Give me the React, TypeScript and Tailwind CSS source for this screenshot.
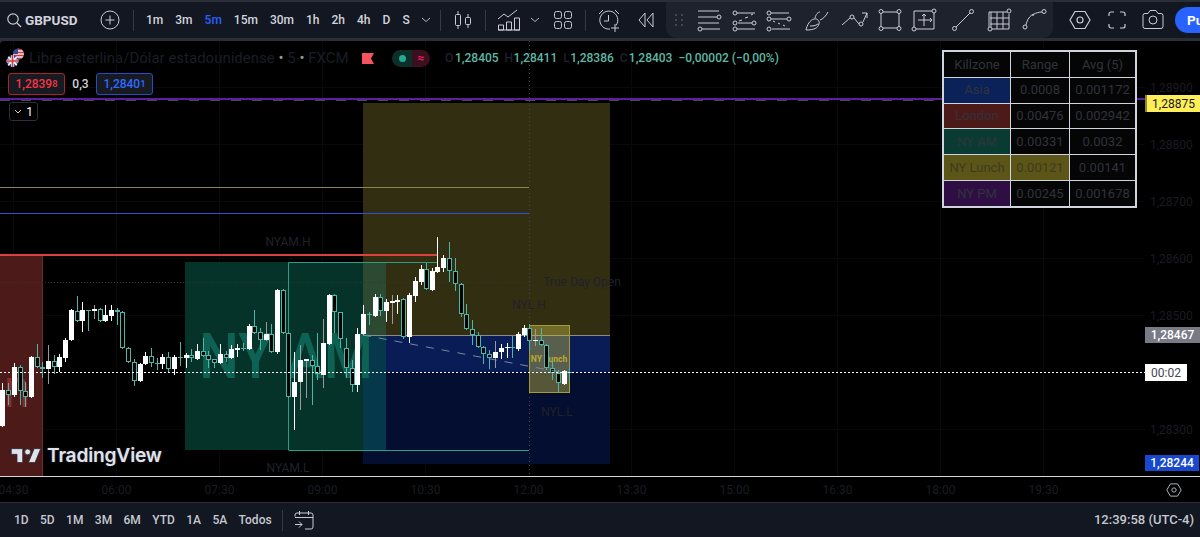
import type { ReactNode } from 'react'

type Kind = 'w' | 'g' | 't'
// x, wick top, body top, body bottom, wick bottom, kind
const CANDLES: [number, number, number, number, number, Kind][] = [
  [2, 383, 390, 426, 427, 'w'], [8, 383, 390, 395, 405, 't'], [14, 363, 367, 395, 397, 'w'], [20, 365, 367, 391, 405, 't'],
  [25, 382, 391, 397, 407, 't'], [31, 356, 357, 397, 398, 'w'], [37, 344, 357, 367, 368, 't'], [42, 362, 367, 369, 378, 't'],
  [48, 345, 361, 369, 384, 'g'], [54, 355, 361, 367, 374, 't'], [59, 354, 357, 367, 372, 'w'], [65, 338, 340, 358, 362, 'w'],
  [71, 309, 310, 340, 341, 'w'], [77, 296, 311, 321, 322, 't'], [82, 302, 310, 321, 332, 'w'], [88, 310, 310, 311, 331, 't'],
  [94, 305, 309, 311, 319, 'g'], [100, 308, 309, 321, 322, 't'], [105, 305, 315, 321, 322, 'w'], [111, 305, 310, 316, 321, 'w'],
  [117, 308, 310, 312, 325, 't'], [122, 311, 312, 348, 349, 't'], [128, 347, 348, 362, 363, 't'], [134, 359, 362, 381, 386, 't'],
  [140, 363, 364, 381, 382, 'w'], [145, 352, 356, 364, 365, 'w'], [151, 348, 356, 363, 367, 't'], [157, 358, 363, 364, 370, 't'],
  [162, 354, 357, 364, 369, 'w'], [168, 352, 357, 369, 372, 't'], [174, 355, 357, 369, 375, 'w'], [180, 342, 357, 358, 366, 't'],
  [186, 353, 355, 358, 368, 'w'], [191, 349, 355, 358, 362, 't'], [197, 344, 351, 359, 360, 'w'], [203, 338, 351, 356, 357, 't'],
  [208, 351, 355, 360, 368, 't'], [214, 359, 359, 363, 368, 't'], [220, 344, 354, 363, 364, 'w'], [226, 351, 354, 358, 362, 't'],
  [231, 345, 349, 358, 359, 'w'], [237, 344, 348, 350, 357, 'w'], [243, 343, 348, 349, 351, 't'], [249, 324, 326, 349, 350, 'w'],
  [254, 310, 326, 333, 334, 't'], [260, 328, 332, 340, 350, 't'], [266, 322, 334, 340, 341, 'g'], [271, 324, 334, 352, 353, 't'],
  [277, 289, 290, 352, 354, 'w'], [283, 289, 290, 333, 334, 't'], [288, 332, 333, 397, 398, 't'], [294, 352, 382, 397, 430, 'w'],
  [300, 345, 360, 382, 410, 'g'], [306, 359, 359, 361, 398, 'g'], [312, 355, 360, 366, 405, 't'], [317, 333, 366, 374, 380, 't'],
  [323, 319, 343, 375, 388, 'g'], [329, 294, 295, 344, 345, 'w'], [334, 294, 295, 312, 333, 't'], [340, 312, 312, 339, 348, 't'],
  [346, 338, 348, 368, 378, 't'], [352, 360, 368, 385, 392, 't'], [357, 328, 334, 385, 392, 'w'], [363, 305, 314, 334, 335, 'w'],
  [369, 312, 314, 315, 325, 't'], [375, 294, 297, 316, 317, 'w'], [380, 294, 297, 311, 316, 't'], [386, 299, 302, 311, 322, 'w'],
  [392, 295, 301, 303, 324, 'g'], [397, 295, 300, 302, 314, 'w'], [403, 298, 299, 337, 339, 't'], [409, 293, 295, 337, 343, 'w'],
  [415, 277, 281, 296, 302, 'w'], [421, 265, 269, 282, 285, 'w'], [426, 263, 269, 289, 290, 't'], [432, 268, 271, 290, 291, 'w'],
  [437, 237, 267, 272, 273, 'w'], [443, 255, 258, 268, 272, 'w'], [449, 242, 258, 271, 282, 't'], [455, 258, 271, 284, 291, 't'],
  [461, 283, 284, 314, 317, 't'], [466, 304, 314, 329, 330, 't'], [472, 320, 329, 335, 345, 't'], [478, 332, 335, 347, 348, 't'],
  [483, 346, 347, 354, 364, 't'], [489, 350, 354, 358, 369, 't'], [495, 341, 352, 358, 368, 'g'], [501, 344, 348, 352, 359, 'w'],
  [507, 343, 347, 348, 358, 'w'], [512, 336, 347, 348, 358, 't'], [518, 332, 334, 349, 351, 'w'], [524, 325, 328, 335, 337, 'w'],
  [529, 324, 328, 341, 350, 't'], [535, 329, 340, 341, 346, 'g'], [541, 328, 340, 345, 346, 't'], [546, 344, 345, 368, 370, 't'],
  [552, 360, 368, 373, 380, 't'], [558, 370, 373, 383, 392, 't'], [564, 370, 371, 384, 385, 'w'], [569, 367, 372, 373, 381, 't'],
]

const INTERVALS = ['1m', '3m', '5m', '15m', '30m', '1h', '2h', '4h', 'D', 'S']
const RANGES = ['1D', '5D', '1M', '3M', '6M', 'YTD', '1A', '5A', 'Todos']
const TIMES = ['04:30', '06:00', '07:30', '09:00', '10:30', '12:00', '13:30', '15:00', '16:30', '18:00', '19:30']
const PRICES: [string, string][] = [
  ['1,28900', 'top-[38px]'], ['1,28800', 'top-[95px]'], ['1,28700', 'top-[152px]'], ['1,28600', 'top-[209px]'],
  ['1,28500', 'top-[266px]'], ['1,28300', 'top-[380px]'],
]
const TABLE = [
  { name: 'Asia', bg: 'bg-[#0b2258]', range: '0.0008', avg: '0.001172' },
  { name: 'London', bg: 'bg-[#4d1a1a]', range: '0.00476', avg: '0.002942' },
  { name: 'NY AM', bg: 'bg-[#0a3b33]', range: '0.00331', avg: '0.0032' },
  { name: 'NY Lunch', bg: 'bg-[#5c5518]', range: '0.00121', avg: '0.00141', hot: true },
  { name: 'NY PM', bg: 'bg-[#2f0f43]', range: '0.00245', avg: '0.001678' },
]

function Ic({ children, className = '' }: { children: ReactNode; className?: string }) {
  return (
    <svg viewBox="0 0 28 28" fill="none" stroke="#c9ccd4" strokeWidth="1" className={`w-7 h-7 shrink-0 ${className}`}>
      {children}
    </svg>
  )
}

function Chevron({ className = '' }: { className?: string }) {
  return (
    <svg viewBox="0 0 10 6" fill="none" stroke="#b2b5be" strokeWidth="1" className={`w-2.5 h-1.5 shrink-0 ${className}`}>
      <path d="M1 1l4 3.5L9 1" />
    </svg>
  )
}

function Sep({ className = '' }: { className?: string }) {
  return <div className={`w-px h-[21px] bg-[#363a45] shrink-0 ${className}`} />
}

function Hex({ className = '' }: { className?: string }) {
  return (
    <Ic className={className}>
      <path d="M9 5.5h10l5 8.5-5 8.5H9L4 14z" strokeWidth="1.2" />
      <circle cx="14" cy="14" r="3" strokeWidth="1.2" />
    </Ic>
  )
}

function TopBar() {
  return (
    <div className="h-[36px] mt-[2px] flex items-center bg-[#131722] shrink-0 text-[#d1d4dc] text-[12px] font-medium">
      <svg viewBox="0 0 16 16" fill="none" stroke="#c9ccd4" strokeWidth="1.2" className="w-4 h-4 ml-[6px] shrink-0">
        <circle cx="7" cy="7" r="5.2" />
        <path d="M11 11l4 4" />
      </svg>
      <span className="ml-[3px] font-bold text-[13.5px] w-[50px]">GBPUSD</span>
      <svg viewBox="0 0 20 20" fill="none" stroke="#c9ccd4" strokeWidth="1" className="w-5 h-5 ml-[25px] shrink-0">
        <circle cx="10" cy="10" r="9" />
        <path d="M10 5.5v9M5.5 10h9" />
      </svg>
      <Sep className="ml-[13px]" />
      <div className="flex items-center gap-3 ml-3 w-[264px] shrink-0">
        {INTERVALS.map((t) => (
          <span key={t} className={t === '5m' ? 'text-[#2962ff]' : ''}>{t}</span>
        ))}
      </div>
      <Chevron className="ml-[11px]" />
      <Sep className="ml-[9px]" />
      <Ic className="ml-2">
        <path d="M9 5v18M19 8v14" />
        <rect x="6.5" y="8.5" width="5" height="11" rx="1" fill="#131722" />
        <rect x="16.5" y="11.5" width="5" height="7" rx="1" fill="#131722" />
      </Ic>
      <Sep className="ml-2" />
      <Ic className="ml-[9px]">
        <path d="M3 13l6-5 4 3 9-7" />
        <path d="M3.5 24v-5h5v5zM11.5 24v-8h5v8zM19.5 24V12h5v12zM3 24h22" />
      </Ic>
      <Chevron className="ml-[7px]" />
      <Ic className="ml-[9px]">
        <rect x="5.5" y="5.5" width="7" height="7" rx="2" />
        <rect x="15.5" y="5.5" width="7" height="7" rx="2" />
        <rect x="5.5" y="15.5" width="7" height="7" rx="2" />
        <rect x="15.5" y="15.5" width="7" height="7" rx="2" />
      </Ic>
      <Sep className="ml-2" />
      <Ic className="ml-[9px]">
        <path d="M21 19.5A9 9 0 1 0 15 23" />
        <path d="M13.5 9v6H9M4 8l4-4M20 4l4 4M20 18v8M16 22h8" />
      </Ic>
      <Ic className="ml-[9px]">
        <path d="M13 7l-6 7 6 7zM21 7l-6 7 6 7z" />
      </Ic>
      <div className="ml-[6px] w-[387px] h-[36px] flex items-center bg-[#1e222d] rounded-b-[10px] shrink-0">
        <div className="ml-[9px] grid grid-cols-2 gap-x-[4px] gap-y-[3px] w-[7px] shrink-0">
          {[0, 1, 2, 3, 4, 5].map((i) => <span key={i} className="w-[2px] h-[2px] bg-[#434651]" />)}
        </div>
        <Ic className="ml-[13px]">
          <path d="M3 5h21M3 11h19M3 17h21M7 23h18" />
          <circle cx="24" cy="11" r="2" /><circle cx="5" cy="23" r="2" />
        </Ic>
        <Ic className="ml-[7px]">
          <path d="M7 7h18M8 17h14M7 23h18M9 15l3-1m3-2l3-1m3-2l2-1" />
          <circle cx="5" cy="7" r="2" /><circle cx="5" cy="17" r="2" /><circle cx="24" cy="17" r="2" /><circle cx="5" cy="23" r="2" />
        </Ic>
        <Ic className="ml-[7px]">
          <path d="M6 7h18M6 13h16M7 23h18M8 15l2 1m3 1l2 1m3 1l2 1" />
          <circle cx="4" cy="7" r="2" /><circle cx="4" cy="13" r="2" /><circle cx="24" cy="13" r="2" /><circle cx="4" cy="23" r="2" />
        </Ic>
        <Ic className="ml-[11px]">
          <path d="M2 24c1-5 4-10 8-11 3-1 6 2 5 5-1 4-5 6-13 6zM11 12c1-4 3-6 5-6M16 14c3-1 6-4 8-8M6 20c3 0 5 0 8-2" />
        </Ic>
        <Ic className="ml-2">
          <path d="M2 19l8-7M14 12l5 6M23 16l4-9M27 7h-5M27 7v5" />
          <circle cx="12" cy="11" r="2" /><circle cx="21" cy="18" r="2" />
        </Ic>
        <Ic className="ml-2">
          <path d="M5 6h18M5 22h18M5 6v16M23 6v16" />
          <circle cx="5" cy="5.5" r="2" fill="#1e222d" /><circle cx="23" cy="5.5" r="2" fill="#1e222d" />
          <circle cx="5" cy="22.5" r="2" fill="#1e222d" /><circle cx="23" cy="22.5" r="2" fill="#1e222d" />
        </Ic>
        <Ic className="ml-[6px]">
          <path d="M4 5h18M24 7v16H6M4 5v16M14 9v11M8 14h14M12 10l2-2 2 2M20 12l2 2-2 2" />
          <circle cx="24" cy="5" r="2" fill="#1e222d" /><circle cx="4" cy="23" r="2" fill="#1e222d" />
        </Ic>
        <Ic className="ml-[11px]">
          <path d="M7 21L21 7" />
          <circle cx="5.5" cy="22.5" r="2" /><circle cx="22.5" cy="5.5" r="2" />
        </Ic>
        <Ic className="ml-2">
          <path d="M4 6h18M5 12h19M5 18h19M6 23h18M6 6v15M12 6v17M18 6v17M24 8v15M4 6v15" />
          <circle cx="24" cy="5" r="2" fill="#1e222d" /><circle cx="5" cy="23" r="2" fill="#1e222d" />
        </Ic>
        <Ic className="ml-[7px]">
          <path d="M6 19c1-5 4-10 8-11 2-1 5-2 8-2" />
          <circle cx="5" cy="21" r="2" /><circle cx="24" cy="5.5" r="2" />
          <circle cx="13" cy="9" r="0.6" />
        </Ic>
      </div>
      <Hex className="ml-[13px]" />
      <Ic className="ml-[9px]">
        <path d="M6 10V8a2 2 0 0 1 2-2h3M17 6h3a2 2 0 0 1 2 2v2M22 18v2a2 2 0 0 1-2 2h-3M11 22H8a2 2 0 0 1-2-2v-2" strokeWidth="1.2" />
      </Ic>
      <Ic className="ml-2">
        <path d="M4 9.5a2 2 0 0 1 2-2h3l2-3h6l2 3h3a2 2 0 0 1 2 2v11a2 2 0 0 1-2 2H6a2 2 0 0 1-2-2z" />
        <circle cx="14" cy="14" r="4" />
      </Ic>
      <div className="ml-2 flex-1 h-[26px] rounded-l-full bg-[#2962ff] text-white font-bold text-[13.5px] pl-3 flex items-center">
        Pu
      </div>
    </div>
  )
}

function Flags() {
  return (
    <svg viewBox="0 0 20 20" className="w-5 h-5 shrink-0 -ml-px">
      <defs>
        <clipPath id="us"><circle cx="12.5" cy="6" r="5.5" /></clipPath>
        <clipPath id="uk"><circle cx="6.5" cy="13" r="6" /></clipPath>
      </defs>
      <g clipPath="url(#us)">
        <rect x="6" width="14" height="12" fill="#eee" />
        <path d="M6 1.5h14M6 4.5h14M6 7.5h14M6 10.5h14" stroke="#d8343f" strokeWidth="1.4" />
        <rect x="6" width="6" height="6" fill="#2b4a9b" />
      </g>
      <circle cx="12.5" cy="6" r="6" fill="none" stroke="#000" strokeWidth="0.6" />
      <g clipPath="url(#uk)">
        <rect y="6" width="14" height="14" fill="#2b4a9b" />
        <path d="M0 7l13 12M13 7L0 19" stroke="#eee" strokeWidth="2" />
        <path d="M6.5 6v14M0 13h14" stroke="#eee" strokeWidth="3" />
        <path d="M6.5 6v14M0 13h14" stroke="#d8343f" strokeWidth="1.6" />
      </g>
    </svg>
  )
}

function Legend() {
  return (
    <div className="absolute left-[7px] top-[7px] flex flex-col items-start">
      <div className="flex items-center h-5">
        <Flags />
        <span className="ml-[3px] text-[15px] w-[322px] whitespace-nowrap text-[#1a1d26]">
          Libra esterlina/Dólar estadounidense <span className="text-[#9598a1]">•</span> 5 <span className="text-[#9598a1]">•</span> FXCM
        </span>
        <svg viewBox="0 0 12 11" className="ml-[11px] w-3 h-[11px] shrink-0">
          <path d="M0 0h12L9 5.5l3 5.5H0z" fill="#f7525f" />
        </svg>
        <div className="ml-[18px] flex h-[17px] w-[38px] rounded-full overflow-hidden shrink-0">
          <div className="w-[20px] bg-[#0d2f2a] flex items-center justify-center">
            <span className="w-[7px] h-[7px] rounded-full bg-[#22ab94]" />
          </div>
          <div className="w-[18px] bg-[#3a0f1e] text-[#e91e63] text-[12px] font-bold leading-[16px] text-center">≈</div>
        </div>
        <div className="ml-[15px] flex items-center text-[12px] font-medium text-[#5fb8a6] whitespace-nowrap">
          <span className="text-[#1e222d] w-[10px]">O</span><span>1,28405</span>
          <span className="text-[#1e222d] ml-[6px] w-[9px]">H</span><span>1,28411</span>
          <span className="text-[#1e222d] ml-[6px] w-[7px]">L</span><span>1,28386</span>
          <span className="text-[#1e222d] ml-[6px] w-[9px]">C</span><span>1,28403</span>
          <span className="ml-[6px]">−0,00002 (−0,00%)</span>
        </div>
      </div>
      <div className="flex items-center mt-[5px] ml-px text-[12px] font-medium">
        <div className="w-[57px] h-[22px] border border-[#a9232f] rounded-[3px] bg-[#181a22] text-[#f23645] flex items-center justify-center">
          1,2839<sup className="text-[9.5px] top-0">8</sup>
        </div>
        <span className="w-[31px] text-center text-[#d1d4dc]">0,3</span>
        <div className="w-[57px] h-[22px] border border-[#1f4fc4] rounded-[3px] bg-[#181a22] text-[#2f6bff] flex items-center justify-center">
          1,2840<sup className="text-[9.5px] top-0">1</sup>
        </div>
      </div>
      <div className="mt-[7px] ml-[2px] w-[29px] h-[19px] border border-[#2a2e39] rounded-[3px] flex items-center justify-center gap-[4px] text-white text-[12px]">
        <svg viewBox="0 0 8 5" fill="none" stroke="#d1d4dc" className="w-2 h-[5px]"><path d="M1 1l3 3 3-3" /></svg>
        1
      </div>
    </div>
  )
}

function KillzoneTable() {
  const cell = 'flex items-center justify-center bg-[#050505]'
  return (
    <div className="absolute left-[942px] top-[9px] w-[195px] grid grid-cols-[66px_58px_65px] auto-rows-[24.8px] gap-px border-2 border-[#d1d4dc] bg-[#d1d4dc] text-[13px] text-[#30333b]">
      <div className={cell}>Killzone</div>
      <div className={cell}>Range</div>
      <div className={cell}>Avg (5)</div>
      {TABLE.map((r) => (
        <div key={r.name} className="contents">
          <div className={`flex items-center justify-center ${r.bg} ${r.hot ? 'text-[#3d3b1c]' : ''}`}>{r.name}</div>
          <div className={r.hot ? 'flex items-center justify-center bg-[#5c5518] text-[#3d3b1c]' : cell}>{r.range}</div>
          <div className={cell}>{r.avg}</div>
        </div>
      ))}
    </div>
  )
}

function ChartSvg() {
  return (
    <svg viewBox="0 41 1145 435" className="absolute inset-0 w-[1145px] h-[435px]">
      {/* grid */}
      {TIMES.map((_, i) => <rect key={i} x={13 + i * 103} y="41" width="1" height="435" fill="#08090b" />)}
      {[87, 144, 201, 258, 315, 429].map((y) => <rect key={y} x="0" y={y} width="1145" height="1" fill="#08090b" />)}

      {/* killzone boxes */}
      <rect x="0" y="254" width="43" height="222" fill="#4d1a1a" />
      <rect x="42" y="254" width="1" height="222" fill="#6b2a2a" />
      <text x="4" y="407" fontSize="55" fill="#8a2a2c" textLength="26" lengthAdjust="spacingAndGlyphs">n</text>
      <rect x="185" y="262" width="201" height="188" fill="#053229" />
      <rect x="363" y="103" width="247" height="232" fill="#322e12" />
      <rect x="363" y="335" width="247" height="37" fill="#0a1c55" />
      <rect x="363" y="372" width="247" height="92" fill="#040e30" />
      <rect x="363" y="262" width="23" height="73" fill="#2c4a32" />
      <rect x="363" y="335" width="23" height="115" fill="#04384a" />
      <text x="199" y="378" fontSize="63" fontWeight="500" fill="#0d6254" textLength="174" lengthAdjust="spacingAndGlyphs">NY AM</text>

      {/* levels */}
      <rect x="0" y="98" width="1145" height="2" fill="#5b1fa0" />
      <path d="M0 100.5H942" stroke="#4a4a55" strokeDasharray="10 11" />
      <rect x="0" y="187" width="529" height="1" fill="#8a8350" />
      <rect x="0" y="213" width="529" height="1" fill="#2f50d8" />
      <rect x="0" y="254" width="437" height="2" fill="#d9423f" />
      <path d="M0 282.5H530" stroke="#333" strokeDasharray="1 2" />
      <rect x="363" y="335" width="247" height="1" fill="#8a8a8a" />
      <path d="M288.5 450V262.5H437M288.5 450.5H529" stroke="#2a9d86" fill="none" />
      <path d="M529.5 41V476" stroke="#444" strokeDasharray="1 3" />

      {/* NY Lunch */}
      <rect x="529.5" y="325.5" width="40" height="67" fill="#c9bd46" fillOpacity="0.42" stroke="#a89a2e" />
      <text x="549" y="362" fontSize="8.5" fontWeight="700" textAnchor="middle" fill="#b8aa2e">NY Lunch</text>

      {/* labels */}
      <g fontSize="12" fill="#1f2229" textAnchor="middle">
        <text x="288" y="246">NYAM.H</text>
        <text x="288" y="472">NYAM.L</text>
        <text x="529" y="309">NYL.H</text>
        <text x="557" y="416">NYL.L</text>
        <text x="582" y="286">True Day Open</text>
      </g>

      {/* candles */}
      {CANDLES.map(([x, wt, bt, bb, wb, k]) => {
        const wick = k === 't' ? '#4db6a6' : k === 'g' ? '#9a9a9a' : '#ffffff'
        return (
          <g key={x}>
            <rect x={x} y={wt} width="1" height={wb - wt} fill={wick} />
            {k === 't' ? (
              bb - bt < 2
                ? <rect x={x - 2} y={bt} width="5" height="1" fill="#4db6a6" />
                : <rect x={x - 1.5} y={bt + 0.5} width="4" height={bb - bt - 1} fill="#000" stroke="#4db6a6" />
            ) : (
              <rect x={x - 2} y={bt} width="5" height={bb - bt} fill="#fff" />
            )}
          </g>
        )
      })}

      {/* trend and last price */}
      <path d="M363 335L565 373" stroke="#7d8598" strokeWidth="1" strokeDasharray="8 8" />
      <path d="M0 372.5H1145" stroke="#fff" strokeDasharray="2 2" />
    </svg>
  )
}

function Watermark() {
  return (
    <div className="absolute left-[10px] top-[405px] flex items-center">
      <svg viewBox="0 0 36 22" className="w-[32px] h-[18px] shrink-0">
        <path d="M14 19H7V9H0V2h14zM29 19h-8l7-17h8z" fill="#e0e3eb" stroke="#2a2e39" strokeWidth="1" />
        <circle cx="20" cy="6" r="3.6" fill="#e0e3eb" stroke="#2a2e39" strokeWidth="1" />
      </svg>
      <span className="ml-[5px] font-[Inter,sans-serif] font-semibold text-[19.2px] leading-none text-[#e0e3eb] tracking-[-0.2px] [text-shadow:0_0_2px_#3a3e4a]">
        TradingView
      </span>
    </div>
  )
}

function PriceAxis() {
  const badge = 'absolute left-0 flex items-center justify-center h-[16px] text-[12px]'
  return (
    <div className="relative w-[55px] shrink-0 text-[12px] text-[#1a1c22]">
      {PRICES.map(([p, top]) => (
        <span key={p} className={`absolute left-[5px] ${top}`}>{p}</span>
      ))}
      <div className={`${badge} top-[54px] w-[55px] h-[17px] bg-[#ffee58] border-l-2 border-[#8a8630] text-[#131722]`}>1,28875</div>
      <div className={`${badge} top-[286px] w-[55px] bg-[#787b86] text-white font-medium`}>1,28467</div>
      <div className={`${badge} top-[323px] w-[42px] h-[17px] bg-white text-[#434651]`}>00:02</div>
      <div className={`${badge} top-[414px] w-[54px] bg-[#1848cc] text-white font-medium`}>1,28244</div>
    </div>
  )
}

export default function App() {
  return (
    <div className="w-[1200px] h-[537px] overflow-hidden flex flex-col bg-[#2a2e39] font-[Roboto,sans-serif]">
      <TopBar />
      <div className="h-[3px] shrink-0" />
      <div className="h-[435px] shrink-0 flex bg-black rounded-tl-[4px] overflow-hidden">
        <div className="relative w-[1145px] shrink-0">
          <ChartSvg />
          <Legend />
          <Watermark />
          <KillzoneTable />
        </div>
        <PriceAxis />
      </div>
      <div className="h-px bg-[#d8d8dc] shrink-0" />
      <div className="h-[25px] shrink-0 bg-black flex items-center overflow-hidden text-[12px] text-[#1a1c22]">
        <div className="flex -ml-[38px] w-[1133px] shrink-0">
          {TIMES.map((t) => <span key={t} className="w-[103px] text-center shrink-0">{t}</span>)}
        </div>
        <Hex className="ml-[65px] scale-[0.72]" />
      </div>
      <div className="h-[1px] bg-[#2a2e39] shrink-0" />
      <div className="flex-1 bg-[#131722] flex items-center text-[12px] font-medium text-[#c5c8d0]">
        <div className="flex items-center gap-[11.4px] ml-[14px]">
          {RANGES.map((r) => <span key={r}>{r}</span>)}
        </div>
        <Sep className="ml-[10px]" />
        <svg viewBox="0 0 20 20" fill="none" stroke="#c9ccd4" className="ml-[11px] w-5 h-5 shrink-0">
          <path d="M1 6.5V5a2 2 0 0 1 2-2h14a2 2 0 0 1 2 2v12a2 2 0 0 1-2 2h-6M1 7.5h18M5.5 1v4M14.5 1v4M1 14.5h7M5 11.5l3 3-3 3" />
        </svg>
        <span className="ml-auto mr-[6px] text-[13px]">12:39:58 (UTC-4)</span>
      </div>
    </div>
  )
}
